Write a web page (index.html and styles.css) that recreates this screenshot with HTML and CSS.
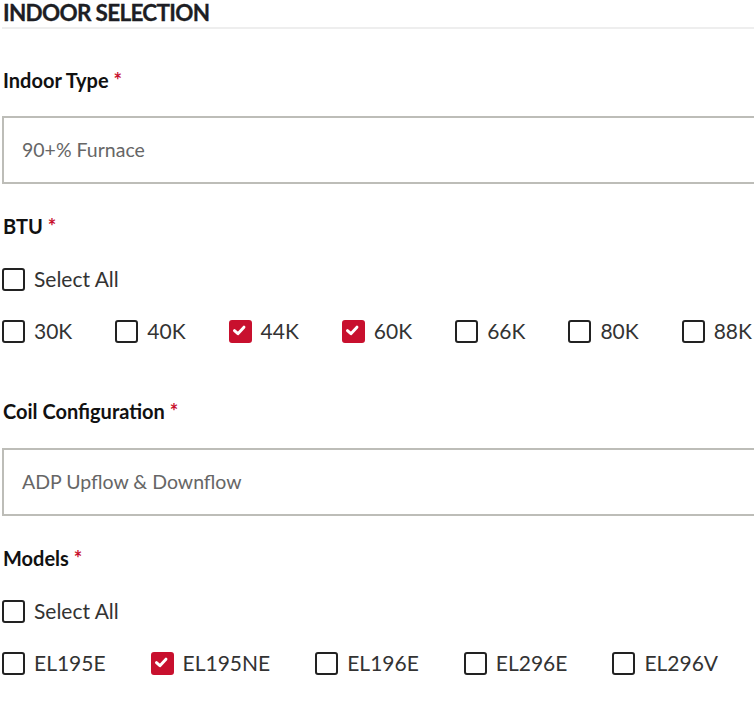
FILE: index.html
```html
<!DOCTYPE html>
<html>
<head>
<meta charset="utf-8">
<link rel="stylesheet" href="styles.css">
</head>
<body>
<div class="page">
  <h2 class="section-title">INDOOR SELECTION</h2>

  <div class="label first">Indoor Type <span class="req">*</span></div>
  <div class="select-box first-box">90+% Furnace</div>

  <div class="label after-input">BTU <span class="req">*</span></div>
  <div class="row select-all">
    <label class="check"><span class="box"></span><span class="text">Select All</span></label>
  </div>
  <div class="row options btu">
    <label class="check"><span class="box"></span><span class="text">30K</span></label>
    <label class="check"><span class="box"></span><span class="text">40K</span></label>
    <label class="check"><span class="box on"><svg viewBox="0 0 22 22"><path d="M5.5 11.5 L9.5 15 L16.5 7.5" /></svg></span><span class="text">44K</span></label>
    <label class="check"><span class="box on"><svg viewBox="0 0 22 22"><path d="M5.5 11.5 L9.5 15 L16.5 7.5" /></svg></span><span class="text">60K</span></label>
    <label class="check"><span class="box"></span><span class="text">66K</span></label>
    <label class="check"><span class="box"></span><span class="text">80K</span></label>
    <label class="check"><span class="box"></span><span class="text">88K</span></label>
  </div>

  <div class="label after-row">Coil Configuration <span class="req">*</span></div>
  <div class="select-box second-box">ADP Upflow &amp; Downflow</div>

  <div class="label after-input">Models <span class="req">*</span></div>
  <div class="row select-all">
    <label class="check"><span class="box"></span><span class="text">Select All</span></label>
  </div>
  <div class="row options">
    <label class="check"><span class="box"></span><span class="text">EL195E</span></label>
    <label class="check"><span class="box on"><svg viewBox="0 0 22 22"><path d="M5.5 11.5 L9.5 15 L16.5 7.5" /></svg></span><span class="text">EL195NE</span></label>
    <label class="check"><span class="box"></span><span class="text">EL196E</span></label>
    <label class="check"><span class="box"></span><span class="text">EL296E</span></label>
    <label class="check"><span class="box"></span><span class="text">EL296V</span></label>
  </div>
</div>
</body>
</html>
```
FILE: styles.css
```css
html, body {
  margin: 0;
  padding: 0;
  background: #fff;
  overflow: hidden;
}
body {
  font-family: "Lato", "Open Sans", sans-serif;
  color: #1a1a1f;
}
.page {
  padding-left: 2px;
  width: 800px;
}
.section-title {
  margin: 0;
  height: 26px;
  font-size: 22.5px;
  line-height: 26px;
  font-weight: 700;
  letter-spacing: -0.7px;
  color: #1d1e24;
  padding-left: 1px;
  padding-bottom: 1px;
  border-bottom: 2px solid #eeeeee;
  -webkit-text-stroke: 0.3px #1d1e24;
}
.label {
  height: 22px;
  font-size: 20px;
  line-height: 22px;
  font-weight: 700;
  color: #111;
  padding-left: 1px;
  white-space: nowrap;
}
.label.first { margin-top: 40px; }
.label.after-input { margin-top: 31px; }
.label.after-row { margin-top: 57px; }
.req {
  color: #c8102e;
  font-weight: 700;
}
.select-box {
  height: 64px;
  border: 2px solid #bdbdb8;
  box-sizing: content-box;
  padding-left: 18px;
  font-size: 19.5px;
  line-height: 64px;
  color: #666;
}
.first-box { margin-top: 25px; }
.second-box { margin-top: 26px; }
.row {
  display: flex;
  align-items: center;
  height: 24px;
}
.row.select-all { margin-top: 30px; }
.row.options { margin-top: 28px; gap: 45px; white-space: nowrap; }
.row.options.btu { gap: 43px; }
.check {
  display: flex;
  align-items: center;
  gap: 9px;
  font-size: 21px;
  line-height: 24px;
  color: #333;
}
.box {
  width: 19px;
  height: 19px;
  border: 2px solid #222;
  border-radius: 3px;
  display: inline-block;
  flex: none;
}
.box.on {
  background: #c8102e;
  border-color: #c8102e;
}
.box svg {
  width: 19px;
  height: 19px;
  display: block;
}
.box svg path {
  fill: none;
  stroke: #fff;
  stroke-width: 3.4;
  stroke-linecap: round;
  stroke-linejoin: round;
  transform: translate(-1.5px, -1.5px);
}
```
